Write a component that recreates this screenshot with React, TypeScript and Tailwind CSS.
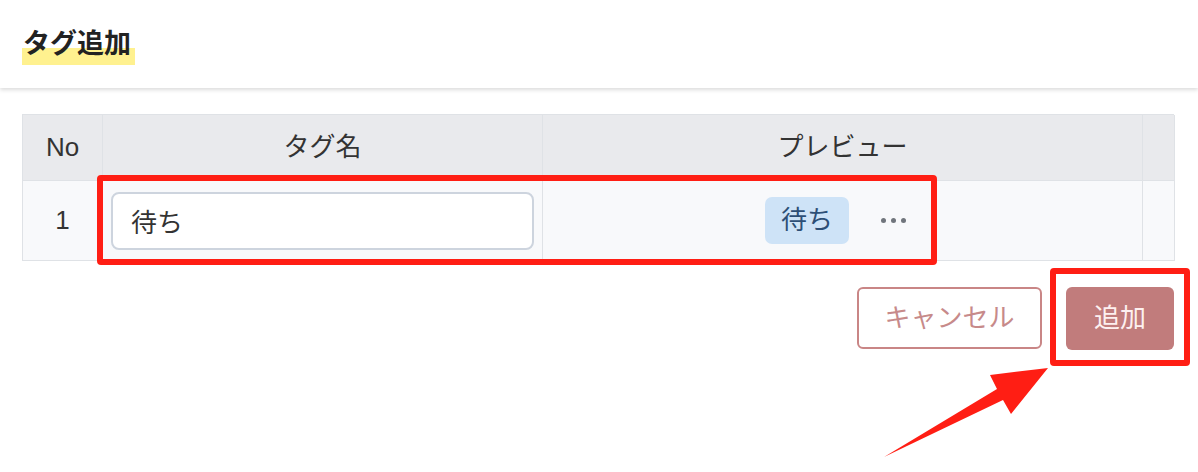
import { useState } from 'react';

const font = { fontFamily: '"Liberation Sans", "Noto Sans CJK JP", sans-serif' };

function Dots() {
  return (
    <div className="flex items-center gap-[5px]">
      <span className="w-[5px] h-[5px] rounded-full bg-[#70757c]" />
      <span className="w-[5px] h-[5px] rounded-full bg-[#70757c]" />
      <span className="w-[5px] h-[5px] rounded-full bg-[#70757c]" />
    </div>
  );
}

export default function App() {
  const [name, setName] = useState('待ち');

  return (
    <div className="relative w-full h-[472px] bg-white overflow-hidden text-[#333]" style={font}>
      <header className="h-[88px] bg-white shadow-[0_2px_4px_rgba(0,0,0,0.14)] px-[22px] pt-[24px]">
        <h1 className="inline-block text-[27px] leading-[41px] font-bold text-[#222] bg-[linear-gradient(transparent_58%,#fff18f_58%)] pl-[1px] pr-[4px]">
          タグ追加
        </h1>
      </header>

      <main className="px-[22px] pt-[26px]">
        <div className="grid grid-cols-[80px_440px_600px_32px] w-[1152px] border-l border-t border-[#dfe2e6] text-[26px]">
          <div className="h-[66px] flex items-center justify-center bg-[#e9eaed] border-r border-b border-[#dfe2e6]">No</div>
          <div className="h-[66px] flex items-center justify-center bg-[#e9eaed] border-r border-b border-[#dfe2e6]">タグ名</div>
          <div className="h-[66px] flex items-center justify-center bg-[#e9eaed] border-r border-b border-[#dfe2e6]">プレビュー</div>
          <div className="h-[66px] bg-[#e9eaed] border-r border-b border-[#dfe2e6]" />

          <div className="h-[80px] flex items-center justify-center bg-[#f8f9fb] border-r border-b border-[#dfe2e6]">1</div>
          <div className="h-[80px] flex items-center px-[8px] bg-[#f8f9fb] border-r border-b border-[#dfe2e6]">
            <input
              value={name}
              onChange={(e) => setName(e.target.value)}
              className="w-full h-[58px] px-[18px] bg-white border-2 border-[#cdd4de] rounded-[8px] outline-none text-[26px] text-[#333]"
              style={font}
            />
          </div>
          <div className="h-[80px] flex items-center justify-center gap-[32px] pr-[14px] bg-[#f8f9fb] border-r border-b border-[#dfe2e6]">
            <span className="h-[47px] px-[16px] flex items-center rounded-[7px] bg-[#cee3f7] text-[#2d4f76]">{name}</span>
            <Dots />
          </div>
          <div className="h-[80px] bg-[#f8f9fb] border-r border-b border-[#dfe2e6]" />
        </div>

        <div className="w-[1152px] flex justify-end gap-[24px] mt-[26px]">
          <button className="w-[185px] h-[62px] rounded-[6px] border-2 border-[#c98686] text-[#c78a8a] text-[26px] bg-white">
            キャンセル
          </button>
          <button className="w-[108px] h-[63px] rounded-[6px] bg-[#c17c7c] text-[#fdf0f0] text-[26px]">
            追加
          </button>
        </div>
      </main>

      <div className="absolute left-[97px] top-[175px] w-[840px] h-[90px] border-[6px] border-[#ff1e14] rounded-[4px] pointer-events-none" />
      <div className="absolute left-[1050px] top-[268px] w-[140px] h-[98px] border-[6px] border-[#ff1e14] rounded-[4px] pointer-events-none" />

      <svg className="absolute inset-0 pointer-events-none" width="1198" height="472" viewBox="0 0 1198 472">
        <polygon points="884,457 997,389 990,375 1048,368 1011,414 1003,400" fill="#ff1e14" />
      </svg>
    </div>
  );
}
